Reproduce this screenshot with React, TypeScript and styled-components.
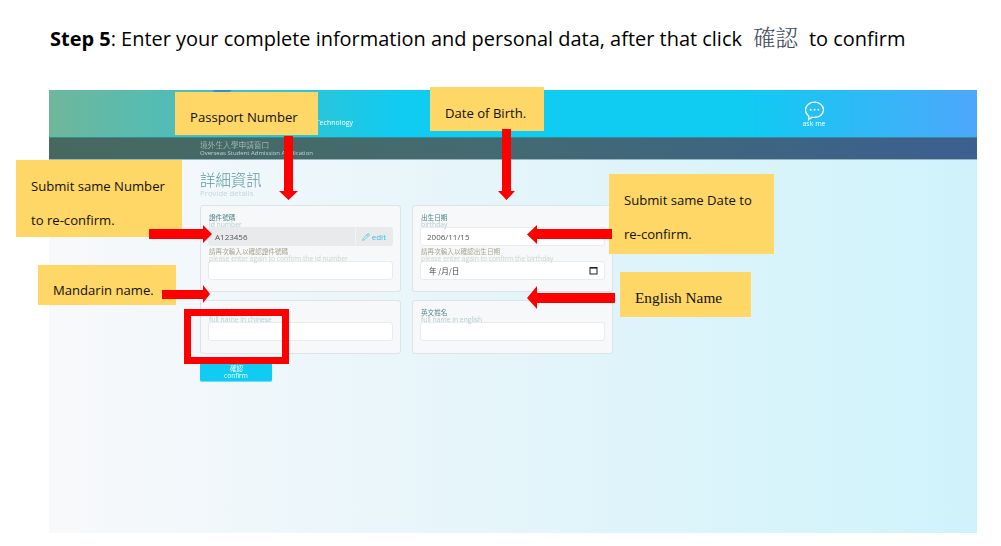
import * as React from "react";
import styled, { createGlobalStyle } from "styled-components";
import { Pencil } from "lucide-react";

const CJK = `"Noto Sans CJK TC", sans-serif`;
const SANS = `"Open Sans", "Noto Sans CJK TC", sans-serif`;

const GlobalStyle = createGlobalStyle`
  html, body {
    margin: 0;
    background: #fff;
    overflow: hidden;
  }
`;

const Page = styled.div`
  position: relative;
  width: 1001px;
  height: 546px;
  overflow: hidden;
  font-family: ${SANS};
`;

const Heading = styled.h1`
  height: 90px;
  margin: 0;
  padding: 22px 0 0 50px;
  box-sizing: border-box;
  font-size: 19.97px;
  line-height: 28px;
  font-weight: 400;
  color: #000;
  white-space: nowrap;
  b {
    font-weight: 700;
  }
`;

const HeadingCjk = styled.span`
  margin: 0 11px;
  font-family: "Noto Serif CJK TC", ${CJK};
  font-size: 22.5px;
  font-weight: 300;
  color: #3f4c5c;
`;

const Shot = styled.div`
  width: 928px;
  height: 443px;
  margin-left: 49px;
  display: flex;
  flex-direction: column;
  filter: blur(0.25px);
`;

const TopBand = styled.header`
  height: 47px;
  flex: none;
  display: flex;
  justify-content: space-between;
  background:
    radial-gradient(ellipse 9px 3px at 173px 0, #2f8fdc 98%, transparent 100%),
    linear-gradient(90deg, #6fb79b 0%, #46bfc0 18%, #10cbf2 38%, #10cbf2 75%, #4da7fb 100%);
  color: #fff;
`;

const SchoolName = styled.div`
  width: 304px;
  padding-top: 28px;
  box-sizing: border-box;
  font-size: 7px;
  line-height: 10px;
  text-align: right;
  white-space: nowrap;
`;

const AskMe = styled.div`
  margin-right: 151px;
  padding-top: 11px;
  width: 24px;
  display: flex;
  flex-direction: column;
  align-items: center;
  font-size: 7px;
  line-height: 6px;
`;

const SubBar = styled.div`
  height: 23px;
  flex: none;
  padding: 3px 0 0 151px;
  box-sizing: border-box;
  background: linear-gradient(90deg, #47685f 0%, #436b70 45%, #3c5f90 100%);
  border-top: 1px solid #2f8c9a;
  border-bottom: 1px solid #9bb6c0;
  color: #c5d2d2;
`;

const SubCn = styled.div`
  font-family: ${CJK};
  font-size: 7.7px;
  font-weight: 300;
  line-height: 8px;
`;

const SubEn = styled.div`
  font-size: 6px;
  line-height: 8px;
`;

const Body = styled.main`
  flex: 1;
  padding: 9px 0 0 151px;
  background: linear-gradient(90deg, #f8f9fb 0%, #e6f5fa 45%, #cff3fb 100%);
`;

const Title = styled.h2`
  margin: 0;
  font-family: ${CJK};
  font-size: 15.4px;
  line-height: 20px;
  font-weight: 300;
  color: #5c9aa3;
`;

const Subtitle = styled.div`
  font-size: 7.8px;
  line-height: 8px;
  color: #c3d6da;
  margin-bottom: 8px;
`;

const CardGrid = styled.div`
  display: grid;
  grid-template-columns: 201px 201px;
  grid-template-rows: 87px 54px;
  column-gap: 11px;
  row-gap: 8px;
`;

const Card = styled.section`
  padding: 8px 7px 0;
  box-sizing: border-box;
  background: #f6f8fa;
  border: 1px solid #dde3e6;
  border-radius: 3px;
`;

const LabelCn = styled.div<{ $tone?: "muted" | "light" }>`
  font-family: ${CJK};
  font-size: 6.6px;
  line-height: 7px;
  padding-left: 1px;
  color: ${({ $tone }) => ($tone === "muted" ? "#a8a48c" : $tone === "light" ? "#fff" : "#52858a")};
`;

const LabelEn = styled.div<{ $muted?: boolean }>`
  font-size: 6.75px;
  line-height: 7px;
  padding-left: 1px;
  white-space: nowrap;
  color: ${({ $muted }) => ($muted ? "#d0d4cc" : "#b8ccd0")};
`;

const Field = styled.div<{ $locked?: boolean }>`
  height: 19px;
  margin: -1px 0 2px;
  display: flex;
  align-items: center;
  justify-content: space-between;
  box-sizing: border-box;
  padding: 0 6px;
  border-radius: 3px;
  border: 1px solid ${({ $locked }) => ($locked ? "#e8eaec" : "#e8ecef")};
  background: ${({ $locked }) => ($locked ? "#e8eaec" : "#fff")};
  font-size: 8px;
  color: #555;
`;

const EditTag = styled.span`
  height: 100%;
  margin-right: -6px;
  padding: 0 6px;
  display: flex;
  align-items: center;
  gap: 2px;
  border-left: 1px solid #f2f4f5;
  color: #35c4e4;
  font-size: 8px;
`;

const DatePlaceholder = styled.span`
  padding-left: 2px;
  font-family: ${CJK};
  font-size: 7.6px;
  color: #444;
`;

const ConfirmButton = styled.button`
  display: block;
  width: 72px;
  height: 20px;
  margin-top: 8px;
  padding: 0;
  border: 0;
  border-radius: 2px;
  background: #10cbf2;
  border-bottom: 1px solid #6fdcf5;
  color: #fff;
  font-family: ${SANS};
  font-size: 6.6px;
  line-height: 7px;
`;

const Note = styled.div<{
  $x: number;
  $y: number;
  $w: number;
  $h: number;
  $drop: number;
  $serif?: boolean;
  $lead?: number;
}>`
  position: absolute;
  left: ${({ $x }) => $x}px;
  top: ${({ $y }) => $y}px;
  width: ${({ $w }) => $w}px;
  height: ${({ $h }) => $h}px;
  padding: ${({ $drop }) => $drop * 2}px 0 0 15px;
  box-sizing: border-box;
  display: flex;
  flex-direction: column;
  justify-content: center;
  background: #fed766;
  color: #111;
  font-family: ${({ $serif }) => ($serif ? `"Liberation Serif", serif` : SANS)};
  font-size: ${({ $serif }) => ($serif ? 15.3 : 13.1)}px;
  line-height: ${({ $lead }) => $lead ?? 20}px;
  white-space: nowrap;
`;

const MarkBox = styled.div`
  position: absolute;
  left: 184px;
  top: 309px;
  width: 105px;
  height: 55px;
  box-sizing: border-box;
  border: 7px solid #ff0000;
`;

const ArrowSvg = styled.svg<{ $x: number; $y: number }>`
  position: absolute;
  left: ${({ $x }) => $x}px;
  top: ${({ $y }) => $y}px;
  display: block;
  fill: #ff0000;
`;

const Arrow = ({ x, y, w, h, points }: { x: number; y: number; w: number; h: number; points: string }) => (
  <ArrowSvg $x={x} $y={y} width={w} height={h} viewBox={`0 0 ${w} ${h}`}>
    <polygon points={points} />
  </ArrowSvg>
);

const ChatIcon = () => (
  <svg width="21" height="20" viewBox="0 0 21 20" fill="none" stroke="#fff" strokeWidth="1.3">
    <path d="M10.5 1.2c5 0 9 3.3 9 7.6s-4 7.6-9 7.6c-.9 0-1.6-.1-2.4-.3L4.6 18.6l.3-3.6C2.8 13.6 1.5 11.4 1.5 8.8c0-4.3 4-7.6 9-7.6z" />
    <circle cx="6.6" cy="8.8" r="1" fill="#fff" stroke="none" />
    <circle cx="10.5" cy="8.8" r="1" fill="#fff" stroke="none" />
    <circle cx="14.4" cy="8.8" r="1" fill="#fff" stroke="none" />
  </svg>
);

const CalendarIcon = () => (
  <svg width="9" height="9" viewBox="0 0 9 9" fill="none" stroke="#222">
    <rect x="1" y="1.5" width="7" height="6.5" strokeWidth="1" />
    <rect x="1" y="1" width="7" height="1.6" fill="#222" stroke="none" />
  </svg>
);

export default function App() {
  return (
    <Page>
      <GlobalStyle />
      <Heading>
        <b>Step 5</b>: Enter your complete information and personal data, after that click
        <HeadingCjk>確認</HeadingCjk>
        to confirm
      </Heading>

      <Shot>
        <TopBand>
          <SchoolName>Technology</SchoolName>
          <AskMe>
            <ChatIcon />
            ask me
          </AskMe>
        </TopBand>
        <SubBar>
          <SubCn>境外生入學申請窗口</SubCn>
          <SubEn>Overseas Student Admission Application</SubEn>
        </SubBar>
        <Body>
          <Title>詳細資訊</Title>
          <Subtitle>Provide details</Subtitle>
          <CardGrid>
            <Card>
              <LabelCn>證件號碼</LabelCn>
              <LabelEn>id number</LabelEn>
              <Field $locked>
                A123456
                <EditTag>
                  <Pencil size={8} />
                  edit
                </EditTag>
              </Field>
              <LabelCn $tone="muted">請再次輸入以確認證件號碼</LabelCn>
              <LabelEn $muted>please enter again to confirm the id number</LabelEn>
              <Field />
            </Card>
            <Card>
              <LabelCn>出生日期</LabelCn>
              <LabelEn>birthday</LabelEn>
              <Field>2006/11/15</Field>
              <LabelCn $tone="muted">請再次輸入以確認出生日期</LabelCn>
              <LabelEn $muted>please enter again to confirm the birthday</LabelEn>
              <Field>
                <DatePlaceholder>年 /月/日</DatePlaceholder>
                <CalendarIcon />
              </Field>
            </Card>
            <Card>
              <LabelCn>中文姓名</LabelCn>
              <LabelEn>full name in chinese</LabelEn>
              <Field />
            </Card>
            <Card>
              <LabelCn>英文姓名</LabelCn>
              <LabelEn>full name in english</LabelEn>
              <Field />
            </Card>
          </CardGrid>
          <ConfirmButton>
            <LabelCn $tone="light">確認</LabelCn>
            confirm
          </ConfirmButton>
        </Body>
      </Shot>

      <Note $x={175} $y={92} $w={143} $h={43} $drop={3}>Passport Number</Note>
      <Note $x={16} $y={160} $w={166} $h={77} $lead={34} $drop={4}>
        <span>Submit same Number</span>
        <span>to re-confirm.</span>
      </Note>
      <Note $x={38} $y={265} $w={138} $h={40} $drop={5}>Mandarin name.</Note>
      <Note $x={430} $y={87} $w={114} $h={44} $drop={4}>Date of Birth.</Note>
      <Note $x={609} $y={174} $w={165} $h={80} $lead={34} $drop={3}>
        <span>Submit same Date to</span>
        <span>re-confirm.</span>
      </Note>
      <Note $x={620} $y={272} $w={131} $h={45} $serif $drop={3}>English Name</Note>
      <MarkBox />

      <Arrow x={279} y={136} w={20} h={64} points="5,0 14,0 14,55 19,55 9.5,64 0,55 5,55" />
      <Arrow x={498} y={129} w={18} h={71} points="4,0 13,0 13,62 17,62 8.5,71 0,62 4,62" />
      <Arrow x={149} y={225} w={63} h={18} points="0,4 54,4 54,0 63,9 54,18 54,14 0,14" />
      <Arrow x={162} y={285} w={48} h={18} points="0,5 41,5 41,0 48,9 41,18 41,14 0,14" />
      <Arrow x={527} y={225} w={85} h={19} points="85,4 10,4 10,0 0,9.5 10,19 10,14 85,14" />
      <Arrow x={527} y={286} w={88} h={23} points="88,7 10,7 10,0 0,12 10,23 10,17 88,17" />
    </Page>
  );
}
